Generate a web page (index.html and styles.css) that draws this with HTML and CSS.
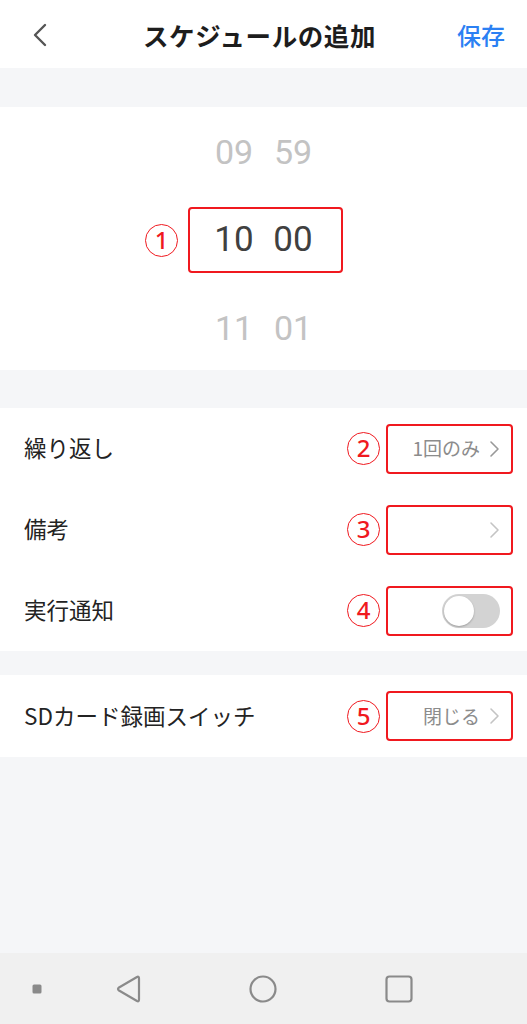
FILE: index.html
```html
<!DOCTYPE html>
<html lang="ja">
<head>
<meta charset="utf-8">
<link rel="stylesheet" href="styles.css">
</head>
<body>
<div class="app">
  <header class="topbar">
    <svg class="back" width="16" height="24" viewBox="0 0 16 24"><path d="M13 2 L3 12 L13 22" fill="none" stroke="#555" stroke-width="2.4" stroke-linecap="round" stroke-linejoin="round"/></svg>
    <h1 class="title">スケジュールの追加</h1>
    <span class="save">保存</span>
  </header>

  <main class="content">
    <section class="card picker">
      <div class="prow faded"><span class="col">09</span><span class="col">59</span></div>
      <div class="prow current"><span class="col">10</span><span class="col">00</span></div>
      <div class="prow faded"><span class="col">11</span><span class="col">01</span></div>
      <span class="num num-picker">1</span>
      <span class="mark mark-picker"></span>
    </section>

    <section class="card list">
      <div class="row">
        <span class="label">繰り返し</span>
        <div class="right">
          <span class="num">2</span>
          <div class="box"><span class="value">1回のみ</span><svg class="chev" width="12" height="20" viewBox="0 0 12 20"><path d="M3 3 L10 10 L3 17" fill="none" stroke="#999" stroke-width="1.6" stroke-linecap="round" stroke-linejoin="round"/></svg></div>
        </div>
      </div>
      <div class="row">
        <span class="label">備考</span>
        <div class="right">
          <span class="num">3</span>
          <div class="box"><svg class="chev light" width="12" height="20" viewBox="0 0 12 20"><path d="M3 3 L10 10 L3 17" fill="none" stroke="#c4c4c4" stroke-width="1.6" stroke-linecap="round" stroke-linejoin="round"/></svg></div>
        </div>
      </div>
      <div class="row">
        <span class="label">実行通知</span>
        <div class="right">
          <span class="num">4</span>
          <div class="box"><span class="toggle"><span class="knob"></span></span></div>
        </div>
      </div>
    </section>

    <section class="card list">
      <div class="row">
        <span class="label">SDカード録画スイッチ</span>
        <div class="right">
          <span class="num">5</span>
          <div class="box"><span class="value">閉じる</span><svg class="chev" width="12" height="20" viewBox="0 0 12 20"><path d="M3 3 L10 10 L3 17" fill="none" stroke="#c4c4c4" stroke-width="1.6" stroke-linecap="round" stroke-linejoin="round"/></svg></div>
        </div>
      </div>
    </section>
  </main>

  <nav class="navbar">
    <svg width="10" height="10" viewBox="0 0 10 10" class="nav-dot"><rect x="0.5" y="0.5" width="9" height="9" rx="1.5" fill="#8a8a8a"/></svg>
    <svg width="26" height="30" viewBox="0 0 26 30" class="nav-back"><path d="M22 3 Q24 2 24 4.5 L24 25.5 Q24 28 22 27 L4 16.5 Q2 15 4 13.5 Z" fill="none" stroke="#8a8a8a" stroke-width="2.2" stroke-linejoin="round"/></svg>
    <svg width="30" height="30" viewBox="0 0 30 30" class="nav-home"><circle cx="15" cy="15" r="12.5" fill="none" stroke="#8a8a8a" stroke-width="2.2"/></svg>
    <svg width="28" height="30" viewBox="0 0 28 30" class="nav-recent"><rect x="1.5" y="2.5" width="25" height="25" rx="3" fill="none" stroke="#8a8a8a" stroke-width="2.2"/></svg>
  </nav>
</div>
</body>
</html>
```

FILE: styles.css
```css
* { box-sizing: border-box; margin: 0; padding: 0; }
html, body { height: 100%; }
body {
  font-family: "Noto Sans CJK JP", "Noto Sans", sans-serif;
  background: #f5f6f8;
  color: #222;
}
.app { display: flex; flex-direction: column; height: 1024px; }

.topbar {
  height: 68px;
  background: #fff;
  display: flex;
  align-items: center;
  justify-content: space-between;
  padding: 0 22px 0 32px;
}
.back { display: block; margin-top: 1px; }
.title {
  font-size: 25.5px;
  font-weight: 700;
  color: #1d1d1d;
  margin-left: 14px;
  letter-spacing: 0.6px;
}
.save { font-size: 24px; color: #2b80f3; font-weight: 500; }

.content {
  flex: 1;
  display: flex;
  flex-direction: column;
  padding-top: 39px;
  gap: 38px;
}
.content .list + .list { margin-top: -14px; }

.card { background: #fff; }

.picker {
  position: relative;
  height: 263px;
  display: flex;
  flex-direction: column;
}
.prow {
  flex: 1;
  display: flex;
  justify-content: center;
  align-items: center;
  gap: 9px;
  font-family: Roboto, "Noto Sans", sans-serif;
}
.prow .col { width: 50px; text-align: center; }
.prow.faded { color: #c3c3c3; font-size: 34px; }
.prow.current { color: #404040; font-size: 35px; padding-top: 3px; }
.prow.faded:first-child { padding-top: 2px; }
.prow.faded:nth-child(3) { padding-top: 3px; }

.mark-picker {
  position: absolute;
  left: 188px;
  top: 100px;
  width: 155px;
  height: 66px;
  border: 2px solid #f0191f;
  border-radius: 4px;
}
.num-picker { position: absolute; left: 145px; top: 117px; }

.num {
  width: 33px;
  height: 33px;
  border: 1.5px solid #f0191f;
  border-radius: 50%;
  color: #f0191f;
  font-family: "Noto Sans", sans-serif;
  font-size: 24px;
  font-weight: 500;
  line-height: 29px;
  text-align: center;
  display: inline-block;
}

.list { display: flex; flex-direction: column; }
.row {
  height: 81px;
  display: flex;
  align-items: center;
  justify-content: space-between;
  padding: 0 14px 0 24px;
}
.list:last-child .row { height: 82px; }
.label { font-size: 22.5px; color: #232323; margin-bottom: 3px; }
.right { display: flex; align-items: center; gap: 6px; }
.box {
  width: 127px;
  height: 50px;
  border: 2px solid #f0191f;
  border-radius: 4px;
  display: flex;
  align-items: center;
  justify-content: flex-end;
  padding-right: 11px;
  gap: 8px;
}
.value { font-size: 19px; color: #8c8c8c; margin-bottom: 2px; }
.chev { display: block; }

.toggle {
  width: 58px;
  height: 34px;
  border-radius: 17px;
  background: #d3d3d3;
  position: relative;
  display: block;
}
.knob {
  position: absolute;
  left: 2px;
  top: 2px;
  width: 30px;
  height: 30px;
  border-radius: 50%;
  background: #fff;
  box-shadow: 0 1px 2px rgba(0,0,0,0.25);
}

.navbar {
  height: 71px;
  background: #f0f0f0;
  display: flex;
  align-items: center;
}
.navbar svg { display: block; }
.nav-dot { margin-left: 32px; }
.nav-back { margin-left: 73px; }
.nav-home { margin-left: 107px; }
.nav-recent { margin-left: 107px; }
```
